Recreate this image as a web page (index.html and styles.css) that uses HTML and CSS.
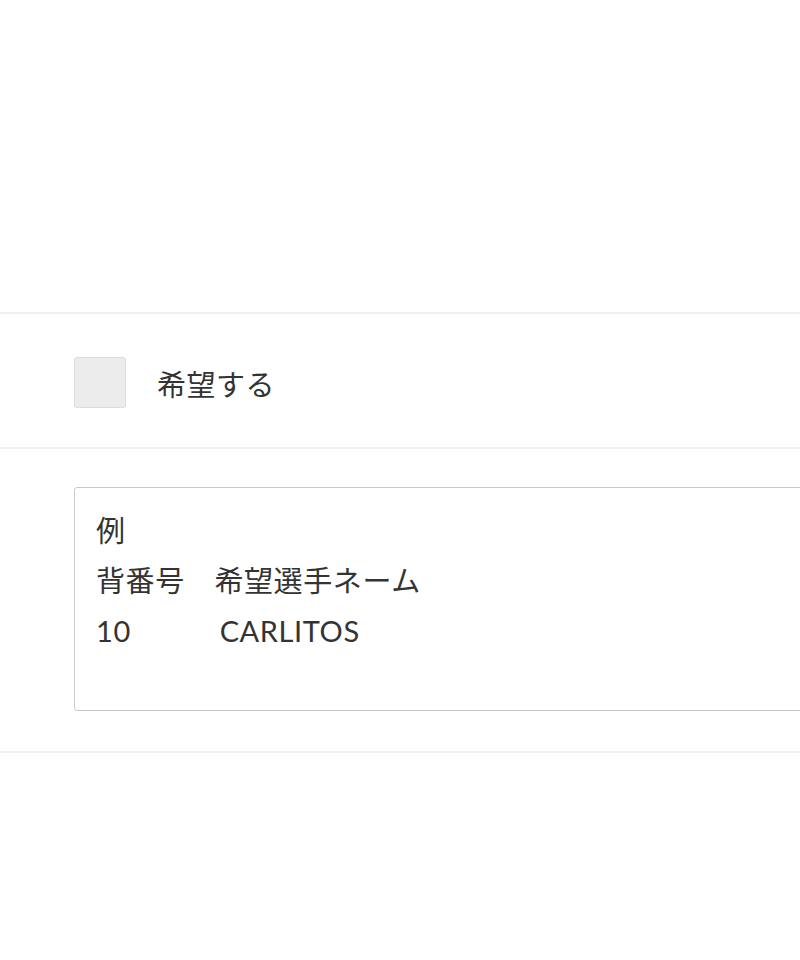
FILE: index.html
```html
<!DOCTYPE html>
<html lang="ja">
<head>
<meta charset="utf-8">
<link rel="stylesheet" href="styles.css">
</head>
<body>
<div class="page">
  <div class="spacer"></div>
  <div class="row row-check">
    <label class="check">
      <span class="box"></span>
      <span class="label">希望する</span>
    </label>
  </div>
  <div class="row row-text">
    <div class="area"><div class="line">例</div><div class="line">背番号　希望選手ネーム</div><div class="line">10　　　CARLITOS</div></div>
  </div>
</div>
</body>
</html>
```
FILE: styles.css
```css
html, body {
  margin: 0;
  padding: 0;
  background: #fff;
  overflow: hidden;
}
.page {
  width: 800px;
  height: 960px;
  overflow: hidden;
  font-family: Lato, "Noto Sans CJK JP", sans-serif;
  color: #333;
}
.spacer {
  height: 312px;
}
.row {
  border-top: 2px solid #f0f0f0;
  padding-left: 74px;
}
.row-check {
  height: 129px;
  padding-top: 4px;
  display: flex;
  align-items: center;
}
.check {
  display: flex;
  align-items: center;
  gap: 31px;
}
.box {
  width: 50px;
  height: 49px;
  background: #ececec;
  border: 1px solid #dcdcdc;
  border-radius: 3px;
}
.label {
  font-size: 29px;
  letter-spacing: 0.5px;
  color: #333;
}
.row-text {
  padding-top: 38px;
  padding-bottom: 40px;
  border-bottom: 2px solid #f0f0f0;
}
.area {
  width: 900px;
  height: 182px;
  border: 1px solid #c8c8c8;
  border-radius: 3px;
  padding: 18px 21px 22px;
  font-size: 29px;
  letter-spacing: 0.6px;
  line-height: 50px;
  white-space: pre;
}
```
